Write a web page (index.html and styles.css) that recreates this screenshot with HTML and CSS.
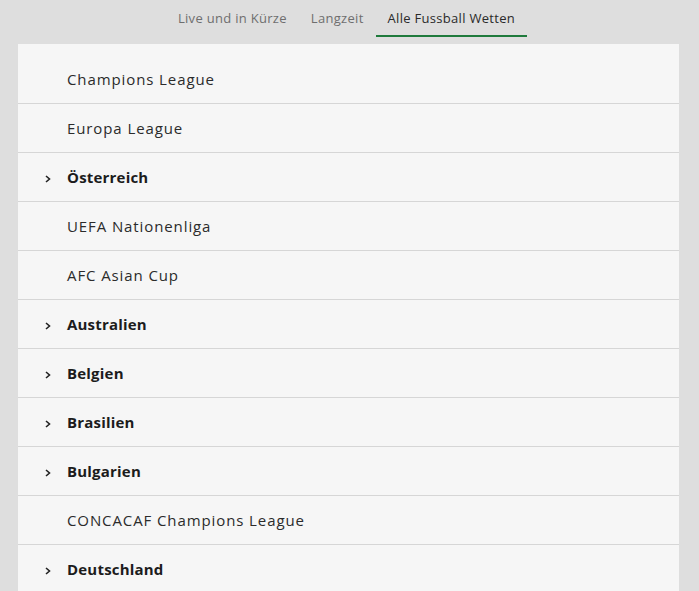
FILE: index.html
```html
<!DOCTYPE html>
<html>
<head>
<meta charset="utf-8">
<link rel="stylesheet" href="styles.css">
</head>
<body>
<nav class="tabs">
  <a class="tab">Live und in Kürze</a>
  <a class="tab">Langzeit</a>
  <a class="tab active">Alle Fussball Wetten</a>
</nav>
<ul class="list">
  <li class="row"><span class="label">Champions League</span></li>
  <li class="row"><span class="label">Europa League</span></li>
  <li class="row group"><svg class="chev" width="6" height="8" viewBox="0 0 6 8"><path d="M1 1 L4.5 4 L1 7" fill="none" stroke="#222" stroke-width="1.6"/></svg><span class="label">Österreich</span></li>
  <li class="row"><span class="label">UEFA Nationenliga</span></li>
  <li class="row"><span class="label">AFC Asian Cup</span></li>
  <li class="row group"><svg class="chev" width="6" height="8" viewBox="0 0 6 8"><path d="M1 1 L4.5 4 L1 7" fill="none" stroke="#222" stroke-width="1.6"/></svg><span class="label">Australien</span></li>
  <li class="row group"><svg class="chev" width="6" height="8" viewBox="0 0 6 8"><path d="M1 1 L4.5 4 L1 7" fill="none" stroke="#222" stroke-width="1.6"/></svg><span class="label">Belgien</span></li>
  <li class="row group"><svg class="chev" width="6" height="8" viewBox="0 0 6 8"><path d="M1 1 L4.5 4 L1 7" fill="none" stroke="#222" stroke-width="1.6"/></svg><span class="label">Brasilien</span></li>
  <li class="row group"><svg class="chev" width="6" height="8" viewBox="0 0 6 8"><path d="M1 1 L4.5 4 L1 7" fill="none" stroke="#222" stroke-width="1.6"/></svg><span class="label">Bulgarien</span></li>
  <li class="row"><span class="label">CONCACAF Champions League</span></li>
  <li class="row group"><svg class="chev" width="6" height="8" viewBox="0 0 6 8"><path d="M1 1 L4.5 4 L1 7" fill="none" stroke="#222" stroke-width="1.6"/></svg><span class="label">Deutschland</span></li>
</ul>
</body>
</html>
```
FILE: styles.css
```css
html, body {
  margin: 0;
  padding: 0;
  background: #dedede;
  font-family: "Open Sans", "Liberation Sans", sans-serif;
  height: 591px;
  overflow: hidden;
}
.tabs {
  display: flex;
  justify-content: center;
  height: 37px;
  padding-right: 6px;
}
.tab {
  display: block;
  padding: 8px 12px 0;
  font-size: 13px;
  letter-spacing: 0.3px;
  color: #6e6e6e;
  height: 27px;
  line-height: 20px;
}
.tab.active {
  color: #2a2a2a;
  border-bottom: 2px solid #1f7a3c;
}
.list {
  list-style: none;
  margin: 7px 20px 0 18px;
  padding: 11px 0 0;
  background: #f6f6f6;
}
.row {
  display: flex;
  align-items: center;
  height: 48px;
  border-bottom: 1px solid #d6d6d6;
  padding-left: 49px;
  font-size: 15px;
  letter-spacing: 0.9px;
  color: #2b2b2b;
  position: relative;
}
.row.group .label {
  font-weight: 700;
  letter-spacing: 0.2px;
  color: #1c1c1c;
}
.chev {
  position: absolute;
  left: 27px;
  top: 22px;
}
```
